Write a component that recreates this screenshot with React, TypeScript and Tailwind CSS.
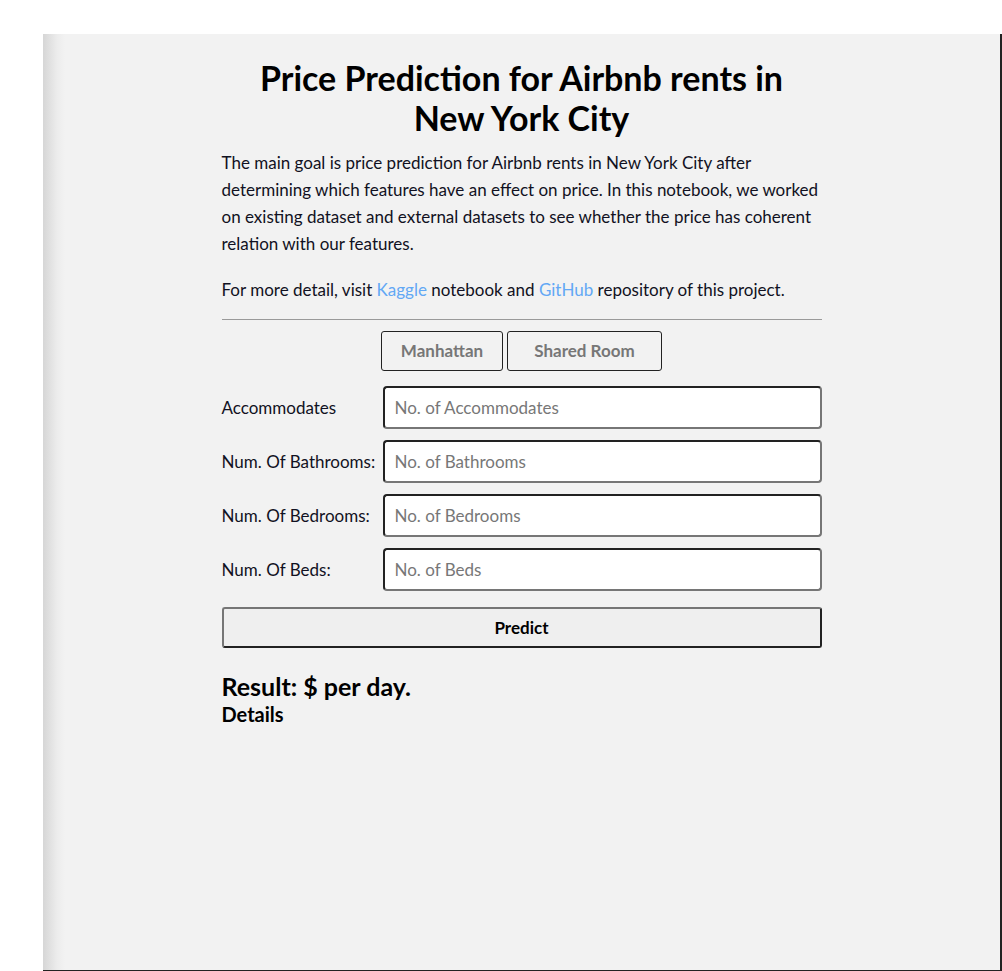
import React from "react";

const fields = [
  { label: "Accommodates", placeholder: "No. of Accommodates" },
  { label: "Num. Of Bathrooms:", placeholder: "No. of Bathrooms" },
  { label: "Num. Of Bedrooms:", placeholder: "No. of Bedrooms" },
  { label: "Num. Of Beds:", placeholder: "No. of Beds" },
];

export default function App() {
  return (
    <div className="min-h-screen bg-white pl-[43px] pt-[34px] font-['Lato',sans-serif] text-[#111122]">
      <div className="h-[937px] border-r-2 border-b border-[#222] bg-[#f2f2f2] bg-[linear-gradient(to_right,#d6d6d6,#ececec_14px,#f2f2f2_22px)]">
        <div className="mx-auto w-[600px] pt-[24px]">
          <h1 className="text-center text-[34px] font-bold leading-[40px] text-black">
            Price Prediction for Airbnb rents in
            <br />
            New York City
          </h1>
          <p className="mt-[11px] text-[17px] leading-[27px]">
            The main goal is price prediction for Airbnb rents in New York City after
            <br />
            determining which features have an effect on price. In this notebook, we worked
            <br />
            on existing dataset and external datasets to see whether the price has coherent
            <br />
            relation with our features.
          </p>
          <p className="mt-[19px] text-[17px] leading-[27px]">
            For more detail, visit{" "}
            <a href="#" className="text-[#62a8f5]">
              Kaggle
            </a>{" "}
            notebook and{" "}
            <a href="#" className="text-[#62a8f5]">
              GitHub
            </a>{" "}
            repository of this project.
          </p>
          <hr className="mt-[16px] border-t border-[#9a9a9a]" />

          <div className="mt-[11px] flex justify-center gap-[4px]">
            <button className="h-[40px] w-[122px] rounded-[3px] border border-[#222] text-[17px] font-bold text-[#777]">
              Manhattan
            </button>
            <button className="h-[40px] w-[155px] rounded-[3px] border border-[#222] text-[17px] font-bold text-[#777]">
              Shared Room
            </button>
          </div>

          <div className="mt-[15px] flex flex-col gap-[11px]">
            {fields.map((f) => (
              <div key={f.label} className="flex items-center">
                <label className="w-[161px] text-[17px]">{f.label}</label>
                <input
                  placeholder={f.placeholder}
                  className="h-[43px] flex-1 rounded-[4px] border-2 border-t-[#222] border-l-[#222] border-b-[#767676] border-r-[#767676] bg-white px-[10px] text-[17px] outline-none placeholder:text-[#777]"
                />
              </div>
            ))}
          </div>

          <button className="mt-[16px] h-[41px] w-full rounded-[3px] border-2 border-t-[#767676] border-l-[#767676] border-b-[#222] border-r-[#222] bg-[#efefef] text-[17px] font-bold text-black">
            Predict
          </button>

          <h2 className="mt-[23px] text-[25px] font-bold leading-[30px] text-black">
            Result: $ per day.
          </h2>
          <h3 className="mt-px text-[20px] font-bold leading-[24px] text-black">Details</h3>
        </div>
      </div>
    </div>
  );
}
